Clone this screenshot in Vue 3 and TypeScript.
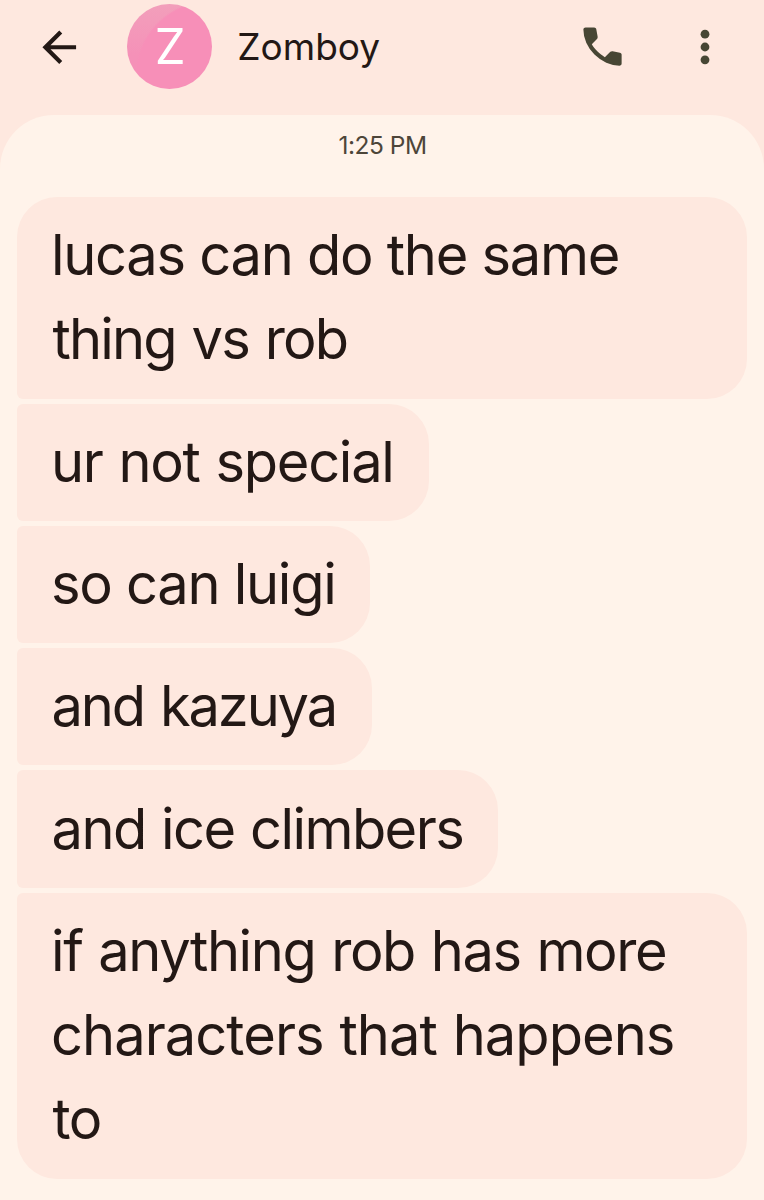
<script setup lang="ts">
interface Line {
  text: string
  spacing: number
  gap?: number
  indent?: number
}
interface Message {
  width: number
  lines: Line[]
}

const contact = 'Zomboy'
const time = '1:25 PM'

const messages: Message[] = [
  {
    width: 730,
    lines: [
      { text: 'lucas can do the same', spacing: -1.28 },
      { text: 'thing vs rob', spacing: -1.85, gap: 2, indent: 1.5 },
    ],
  },
  { width: 411.5, lines: [{ text: 'ur not special', spacing: -1.3, gap: 1.5 }] },
  { width: 353, lines: [{ text: 'so can luigi', spacing: -1.28 }] },
  { width: 355, lines: [{ text: 'and kazuya', spacing: -2.15, gap: 2.5, indent: 0.5 }] },
  { width: 481, lines: [{ text: 'and ice climbers', spacing: -1.56, gap: 1.2, indent: 0.5 }] },
  {
    width: 730,
    lines: [
      { text: 'if anything rob has more', spacing: -1.42, gap: 1.5 },
      { text: 'characters that happens', spacing: -0.95, gap: 1 },
      { text: 'to', spacing: -1.5, indent: 1.5 },
    ],
  },
]

const lineStyle = (l: Line) => ({
  letterSpacing: `${l.spacing}px`,
  wordSpacing: `${l.gap ?? 0}px`,
  marginLeft: `${l.indent ?? 0}px`,
})
</script>

<template>
  <div class="screen">
    <header class="bar">
      <svg class="back" viewBox="0 0 24 24" aria-hidden="true">
        <path d="M20 11H7.83l5.59-5.59L12 4l-8 8 8 8 1.41-1.41L7.83 13H20v-2z" />
      </svg>
      <div class="avatar"><span class="initial">{{ contact.charAt(0) }}</span></div>
      <h1 class="name">{{ contact }}</h1>
      <svg class="call" viewBox="0 0 24 24" aria-hidden="true">
        <path
          d="M19.95 21q-3.125 0-6.175-1.363T8.225 15.8 4.362 10.238 3 4.05q0-.45.3-.75t.75-.3H8.1q.35 0 .625.238t.325.562l.65 3.5q.05.4-.025.675T9.4 8.45L6.975 10.9q.5.925 1.187 1.788t1.513 1.662q.775.775 1.625 1.438T13.1 17l2.35-2.35q.225-.225.588-.338t.712-.062l3.45.7q.35.1.575.363T21 15.9v4.05q0 .45-.3.75t-.75.3Z"
        />
      </svg>
      <svg class="more" viewBox="0 0 10 36" aria-hidden="true">
        <circle cx="5" cy="5.2" r="4.4" />
        <circle cx="5" cy="18" r="4.4" />
        <circle cx="5" cy="30.8" r="4.4" />
      </svg>
    </header>
    <main class="thread">
      <div class="time">{{ time }}</div>
      <div class="messages">
        <div v-for="(m, i) in messages" :key="i" class="bubble" :style="{ width: m.width + 'px' }">
          <div v-for="l in m.lines" :key="l.text" class="line" :style="lineStyle(l)">{{ l.text }}</div>
        </div>
      </div>
    </main>
  </div>
</template>

<style>
body {
  margin: 0;
  background: #fee8df;
}
</style>

<style scoped>
.screen {
  width: 764px;
  height: 1200px;
  overflow: hidden;
  display: flex;
  flex-direction: column;
  background: #fee8df;
  color: #231815;
  font-family: 'Inter', 'Roboto', sans-serif;
}
.bar {
  flex: none;
  box-sizing: border-box;
  height: 115px;
  padding: 0 54.4px 21.5px 34.4px;
  display: flex;
  align-items: center;
}
.back {
  flex: none;
  width: 50.5px;
  height: 50.5px;
  fill: #231815;
}
.avatar {
  flex: none;
  width: 85px;
  height: 85px;
  margin-left: 42.4px;
  border-radius: 50%;
  display: flex;
  align-items: center;
  justify-content: center;
  background:
    radial-gradient(circle at 84px 72px, #f78fb8 0 74px, rgba(247, 143, 184, 0) 76px),
    linear-gradient(180deg, #f29fbb 0, #f591b8 60%);
}
.initial {
  color: #fff;
  font-size: 49px;
  line-height: 60px;
  padding-left: 1px;
}
.name {
  flex: 1;
  margin: 0 0 0 25px;
  font-size: 37px;
  line-height: 46px;
  font-weight: 400;
}
.call {
  flex: none;
  width: 51px;
  height: 51px;
  fill: #474634;
}
.more {
  flex: none;
  width: 10px;
  height: 36px;
  margin-left: 71.5px;
  fill: #474634;
}
.thread {
  flex: 1;
  border-radius: 54px 54px 0 0;
  background: #fff3ea;
}
.time {
  height: 82px;
  line-height: 61px;
  padding-left: 1px;
  text-align: center;
  font-size: 24.5px;
  letter-spacing: -0.5px;
  color: #4d4539;
}
.messages {
  display: flex;
  flex-direction: column;
  align-items: flex-start;
  gap: 5px;
  padding-left: 17px;
}
.bubble {
  box-sizing: border-box;
  padding: 16.2px 0 16.8px 34px;
  border-radius: 6px 40px 40px 6px;
  background: #fee8df;
}
.bubble:first-child {
  border-top-left-radius: 40px;
}
.bubble:last-child {
  border-bottom-left-radius: 40px;
}
.line {
  white-space: nowrap;
  font-size: 56px;
  line-height: 84.3px;
}
</style>
